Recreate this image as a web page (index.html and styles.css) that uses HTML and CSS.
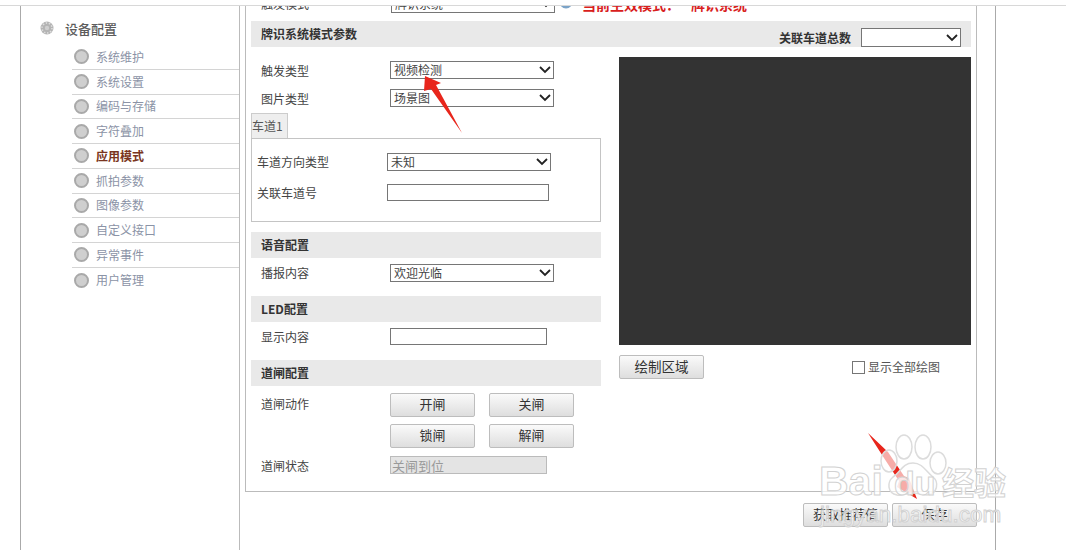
FILE: index.html
```html
<!DOCTYPE html>
<html lang="zh-CN">
<head>
<meta charset="utf-8">
<title>设备配置</title>
<link rel="stylesheet" href="styles.css">
</head>
<body>
<div class="top-strip"></div>
<div class="frame">
  <aside class="sidebar">
    <div class="side-title">
      <svg class="gear" viewBox="0 0 14 14"><circle cx="7" cy="7" r="6.5" fill="#b4b4b4"/><circle cx="7" cy="7" r="5" fill="none" stroke="#dedede" stroke-width="1.6" stroke-dasharray="1.4 1.7"/><circle cx="7" cy="7" r="2.2" fill="#cfcfcf"/></svg>
      <span>设备配置</span>
    </div>
    <ul class="side-list">
      <li class="side-item"><i class="dot"></i>系统维护</li>
      <li class="side-item"><i class="dot"></i>系统设置</li>
      <li class="side-item"><i class="dot"></i>编码与存储</li>
      <li class="side-item"><i class="dot"></i>字符叠加</li>
      <li class="side-item active"><i class="dot"></i>应用模式</li>
      <li class="side-item"><i class="dot"></i>抓拍参数</li>
      <li class="side-item"><i class="dot"></i>图像参数</li>
      <li class="side-item"><i class="dot"></i>自定义接口</li>
      <li class="side-item"><i class="dot"></i>异常事件</li>
      <li class="side-item"><i class="dot"></i>用户管理</li>
    </ul>
  </aside>
  <main class="main">
    <section class="panel">
      <div class="clip-row">
        <div class="clip-inner">
          <span class="label">触发模式</span>
          <select class="sel sel-top"><option>牌识系统</option></select>
          <svg class="tip-icon" viewBox="0 0 16 16"><path d="M0 0h16l-1 8q-7 9-14 0z" fill="#7ba3c7"/><path d="M5 0h6l-1 6H6z" fill="#d3e2ee"/></svg>
          <span class="notice">当前生效模式：<span class="notice-value">牌识系统</span></span>
        </div>
      </div>
      <div class="band band-wide">
        <span>牌识系统模式参数</span>
        <div class="band-right">
          <span>关联车道总数</span>
          <select class="sel sel-count"><option></option></select>
        </div>
      </div>
      <div class="columns">
        <div class="col-left">
          <div class="row row-trigger row-low"><span class="label">触发类型</span><select class="sel"><option>视频检测</option></select></div>
          <div class="row row-image row-low"><span class="label">图片类型</span><select class="sel"><option>场景图</option></select></div>
          <div class="tab">车道1</div>
          <div class="lane-box">
            <div class="lane-row"><span class="lane-label">车道方向类型</span><select class="sel"><option>未知</option></select></div>
            <div class="lane-row lane-row-second"><span class="lane-label">关联车道号</span><input class="txt txt-lane" type="text"></div>
          </div>
          <div class="band band-voice">语音配置</div>
          <div class="row row-after-band"><span class="label">播报内容</span><select class="sel"><option>欢迎光临</option></select></div>
          <div class="band band-led">LED配置</div>
          <div class="row row-after-band"><span class="label">显示内容</span><input class="txt" type="text"></div>
          <div class="band band-gate">道闸配置</div>
          <div class="gate">
            <span class="label gate-label">道闸动作</span>
            <div class="gate-buttons">
              <button class="btn" type="button">开闸</button>
              <button class="btn" type="button">关闸</button>
              <button class="btn" type="button">锁闸</button>
              <button class="btn" type="button">解闸</button>
            </div>
          </div>
          <div class="row row-status row-low"><span class="label">道闸状态</span><input class="txt txt-off" type="text" value="关闸到位" disabled></div>
        </div>
        <div class="col-right">
          <div class="video"></div>
          <div class="draw-row">
            <button class="btn btn-draw" type="button">绘制区域</button>
            <label class="check"><span class="box"></span>显示全部绘图</label>
          </div>
        </div>
      </div>
    </section>
    <div class="footer">
      <button class="btn" type="button">获取推荐值</button>
      <button class="btn" type="button">保存</button>
    </div>
  </main>
</div>
<svg class="overlay" viewBox="0 0 1066 550">
  <polygon class="arrow" points="425,76 441,83 436,85 462,133 431,89 424,91"/>
  <polygon class="arrow" points="868,433 888,452 904,476 909,478 917,499 897,487 899,481 884,458"/>
  <g class="paw">
    <ellipse cx="889" cy="461" rx="8" ry="11"/>
    <ellipse cx="904" cy="447" rx="8" ry="12"/>
    <ellipse cx="923" cy="447" rx="8" ry="12"/>
    <ellipse cx="938" cy="463" rx="8" ry="11"/>
    <path d="M913 463c10 0 13 9 20 14 6 5 5 17-6 18-5 0-9-2-14-2s-10 3-16 2c-10-2-10-13-4-18 8-5 9-14 20-14z"/>
  </g>
  <text class="wm wm-big" x="819" y="495">Bai</text>
  <text class="wm wm-du" x="894" y="495">du</text>
  <text class="wm wm-cn" x="942" y="495">经验</text>
  <text class="wm wm-url" x="820" y="522">jingyan.baidu.com</text>
</svg>
</body>
</html>
```

FILE: styles.css
```css
* { box-sizing: border-box; }
html, body { margin: 0; padding: 0; }
body {
  width: 1066px;
  height: 550px;
  overflow: hidden;
  position: relative;
  background: #fff;
  color: #444;
  font: 12px/1 "Noto Sans CJK SC", "Liberation Sans", sans-serif;
}
.top-strip { height: 6px; border-bottom: 1px solid #d8d8d8; }
.frame {
  display: flex;
  width: 976px;
  height: 544px;
  margin-left: 20px;
  border-left: 1px solid #aaa;
  border-right: 1px solid #aaa;
}
.sidebar { width: 219px; flex: none; border-right: 1px solid #bbb; padding-top: 13px; }
.side-title {
  display: flex;
  align-items: center;
  height: 18px;
  padding-left: 19px;
  gap: 10px;
  font-size: 13px;
  font-weight: 500;
  color: #5c5c5c;
}
.side-title span { margin-left: 1px; }
.gear { width: 14px; height: 14px; flex: none; filter: blur(0.5px); }
.side-list { list-style: none; margin: 8px 0 0 51px; padding: 0; }
.side-item {
  display: flex;
  align-items: center;
  gap: 7px;
  height: 24.75px;
  padding-left: 2px;
  border-bottom: 1px solid #d4d4d4;
  color: #8b93a6;
}
.side-item:last-child { border-bottom: 0; }
.side-item.active { color: #7a3520; font-weight: 700; }
.dot {
  width: 15px;
  height: 15px;
  flex: none;
  border-radius: 50%;
  background: #cfcfcf;
  border: 2px solid #a9a9a9;
}
.main { flex: 1; padding-left: 5px; }
.panel {
  width: 732px;
  height: 486px;
  padding: 0 5px;
  border: 1px solid #bbb;
  border-top: 0;
}
.clip-row { height: 15px; overflow: hidden; }
.clip-inner {
  display: flex;
  align-items: center;
  height: 18px;
  margin-top: -11px;
  padding-left: 10px;
}
.label { width: 129px; flex: none; color: #444; }
.row-low .label { padding-top: 2px; }
.sel {
  appearance: none;
  width: 164px;
  height: 18px;
  padding: 0 0 0 3px;
  margin: 0;
  border: 1px solid #767676;
  border-radius: 0;
  background: #fff url("data:image/svg+xml,%3Csvg xmlns='http://www.w3.org/2000/svg' width='12' height='8'%3E%3Cpath d='M1 1l5 5 5-5' fill='none' stroke='%23222' stroke-width='1.8'/%3E%3C/svg%3E") no-repeat right 2px center;
  color: #444;
  font: 12px/16px "Noto Sans CJK SC", sans-serif;
}
.sel-top { margin-left: 1px; }
.sel-count { width: 100px; height: 19px; }
.tip-icon { width: 16px; height: 16px; margin-left: 3px; flex: none; }
.notice { display: flex; margin-left: 8px; color: #d8201c; font-size: 14px; font-weight: 700; }
.notice-value { margin-left: 11px; }
.band {
  display: flex;
  align-items: center;
  height: 26px;
  padding-left: 10px;
  background: #e9e9e9;
  color: #333;
  font-weight: 700;
}
.band-wide { justify-content: space-between; width: 720px; }
.band-right {
  display: flex;
  align-items: flex-end;
  align-self: stretch;
  gap: 10px;
  padding-right: 10px;
}
.band-right span { align-self: center; margin-top: 7px; }
.columns { display: grid; grid-template-columns: 350px 352px; column-gap: 18px; }
.row { display: flex; align-items: center; padding-left: 10px; }
.row-trigger { margin-top: 14px; }
.row-image { margin-top: 10px; }
.tab {
  width: 37px;
  height: 25px;
  margin-top: 6px;
  padding-top: 6px;
  background: #eee;
  border: 1px solid #ccc;
  border-bottom: 0;
  color: #555;
  font-size: 12px;
}
.lane-box { height: 84px; padding: 14px 5px 0; border: 1px solid #c4c4c4; }
.lane-row { display: flex; align-items: center; }
.lane-row-second { margin-top: 13px; }
.lane-label { width: 130px; flex: none; }
.txt {
  width: 157px;
  height: 17px;
  margin: 0;
  padding: 0 2px;
  border: 1px solid #767676;
  border-radius: 0;
  background: #fff;
  font: 12px "Noto Sans CJK SC", sans-serif;
}
.txt-lane { width: 162px; }
.txt-off { height: 18px; padding: 0 0 0 1px; background: #e4e4e4; border-color: #bbb; color: #999; font: 13px/16px "Noto Sans CJK SC", sans-serif; }
.band-voice { margin-top: 10px; }
.row-after-band { margin-top: 6px; }
.band-led { margin-top: 14px; }
.band-gate { margin-top: 15px; }
.gate { display: flex; margin-top: 7px; padding-left: 10px; }
.gate-label { padding-top: 5px; }
.gate-buttons { display: grid; grid-template-columns: 85px 85px; column-gap: 14px; row-gap: 7px; }
.btn {
  width: 85px;
  height: 24px;
  margin: 0;
  padding: 0 0 3px;
  border: 1px solid #bdbdbd;
  border-radius: 2px;
  background: linear-gradient(#fafafa, #dedede);
  color: #333;
  font: 13px "Noto Sans CJK SC", sans-serif;
}
.row-status { margin-top: 8px; }
.video { height: 288px; margin-top: 10px; background: #333; }
.draw-row { display: flex; align-items: center; justify-content: space-between; margin-top: 10px; padding-right: 31px; }
.btn-draw { font-size: 13.5px; }
.check { display: flex; align-items: center; gap: 3px; color: #555; }
.box { width: 13px; height: 13px; border: 1px solid #767676; background: #fff; }
.footer { display: flex; justify-content: flex-end; gap: 4px; width: 732px; margin-top: 11px; }
.overlay { position: absolute; left: 0; top: 0; width: 1066px; height: 550px; pointer-events: none; }
.arrow { fill: #e8261c; }
.paw ellipse, .paw path { fill: rgba(255, 255, 255, 0.62); stroke: #dcdcdc; stroke-width: 1.5; }
.wm { fill: rgba(255, 255, 255, 0.72); stroke: #d2d2d2; stroke-width: 1; font-family: "Liberation Sans", sans-serif; }
.wm-big { font-size: 41px; font-weight: 700; }
.wm-du { font-size: 34px; font-weight: 700; }
.wm-cn { font-size: 32px; font-family: "Noto Sans CJK SC", sans-serif; font-weight: 700; }
.wm-url { font-size: 22.5px; }
```
